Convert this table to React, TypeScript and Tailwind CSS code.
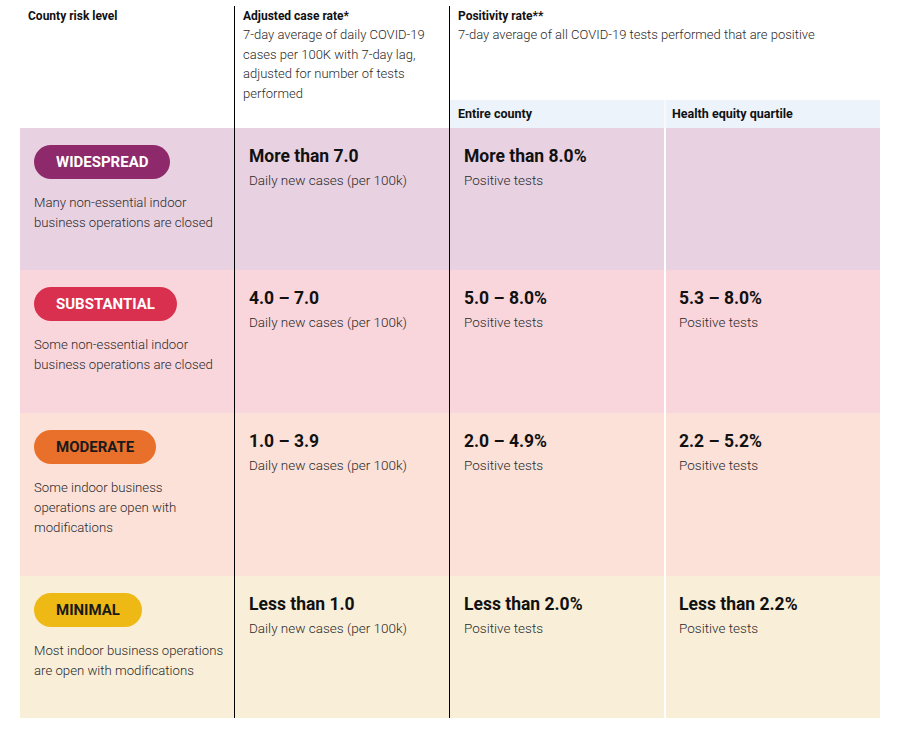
import React from 'react';

type Tier = {
  name: string;
  badge: string;
  rowBg: string;
  height: string;
  note: string[];
  cases: string;
  county: string;
  equity?: string;
};

const tiers: Tier[] = [
  {
    name: 'WIDESPREAD',
    badge: 'bg-[#8e2a6b] text-white',
    rowBg: 'bg-[#e8d1e1]',
    height: 'h-[142px]',
    note: ['Many non-essential indoor', 'business operations are closed'],
    cases: 'More than 7.0',
    county: 'More than 8.0%',
  },
  {
    name: 'SUBSTANTIAL',
    badge: 'bg-[#d9304f] text-white',
    rowBg: 'bg-[#f9d6dc]',
    height: 'h-[143px]',
    note: ['Some non-essential indoor', 'business operations are closed'],
    cases: '4.0 – 7.0',
    county: '5.0 – 8.0%',
    equity: '5.3 – 8.0%',
  },
  {
    name: 'MODERATE',
    badge: 'bg-[#e8702a] text-[#1a1a1a]',
    rowBg: 'bg-[#fbe1d8]',
    height: 'h-[163px]',
    note: ['Some indoor business', 'operations are open with', 'modifications'],
    cases: '1.0 – 3.9',
    county: '2.0 – 4.9%',
    equity: '2.2 – 5.2%',
  },
  {
    name: 'MINIMAL',
    badge: 'bg-[#eeb815] text-[#1a1a1a]',
    rowBg: 'bg-[#f9efd9]',
    height: 'h-[142px]',
    note: ['Most indoor business operations', 'are open with modifications'],
    cases: 'Less than 1.0',
    county: 'Less than 2.0%',
    equity: 'Less than 2.2%',
  },
];

const ValueCell: React.FC<{ value?: string; label: string; className: string }> = ({ value, label, className }) => (
  <div className={`pr-2 pt-[16px] ${className}`}>
    {value && (
      <>
        <div className="text-[17.5px] leading-6 font-bold text-[#111]">{value}</div>
        <div className="mt-[2px] text-[13.5px] leading-5 font-light text-[#2a2a2a]">{label}</div>
      </>
    )}
  </div>
);

const App: React.FC = () => {
  return (
    <div className="w-[900px] h-[735px] bg-white pt-[6px] font-['Roboto',sans-serif]">
      <div className="ml-[20px] grid grid-cols-[214px_215px_215px_216px]">
        {/* header */}
        <div className="row-span-2 pl-2 pt-[2px] text-[12px] leading-4 font-bold text-[#111]">County risk level</div>
        <div className="row-span-2 border-l border-black pl-2 pt-[2px]">
          <div className="text-[12px] leading-4 font-bold text-[#111]">Adjusted case rate*</div>
          <p className="mt-[1px] pr-2 text-[13px] leading-[19.5px] font-light text-[#2a2a2a]">
            7-day average of daily COVID-19 cases per 100K with 7-day lag, adjusted for number of tests performed
          </p>
        </div>
        <div className="col-span-2 h-[94px] border-l border-black pl-2 pt-[2px]">
          <div className="text-[12px] leading-4 font-bold text-[#111]">Positivity rate**</div>
          <p className="mt-[1px] text-[13px] leading-[19.5px] font-light text-[#2a2a2a]">
            7-day average of all COVID-19 tests performed that are positive
          </p>
        </div>
        <div className="flex h-[28px] items-center border-l border-black bg-[#edf3fa] pl-2 text-[12.5px] font-bold text-[#111]">
          Entire county
        </div>
        <div className="flex h-[28px] items-center border-l-2 border-[#f7f9fc] bg-[#edf3fa] pl-[6px] text-[12.5px] font-bold text-[#111]">
          Health equity quartile
        </div>

        {/* tiers */}
        {tiers.map((t) => (
          <React.Fragment key={t.name}>
            <div className={`pl-[14px] pt-[17px] ${t.height} ${t.rowBg}`}>
              <span className={`inline-flex h-[34px] items-center rounded-full px-[22px] text-[15px] font-bold ${t.badge}`}>
                {t.name}
              </span>
              <p className="mt-[14px] text-[13.2px] leading-5 font-light text-[#2a2a2a]">
                {t.note.map((line, i) => (
                  <React.Fragment key={i}>
                    {i > 0 && <br />}
                    {line}
                  </React.Fragment>
                ))}
              </p>
            </div>
            <ValueCell value={t.cases} label="Daily new cases (per 100k)" className={`border-l border-black pl-[14px] ${t.rowBg}`} />
            <ValueCell value={t.county} label="Positive tests" className={`border-l border-black pl-[14px] ${t.rowBg}`} />
            <ValueCell value={t.equity} label="Positive tests" className={`border-l-2 border-white pl-[13px] ${t.rowBg}`} />
          </React.Fragment>
        ))}
      </div>
    </div>
  );
};

export default App;
